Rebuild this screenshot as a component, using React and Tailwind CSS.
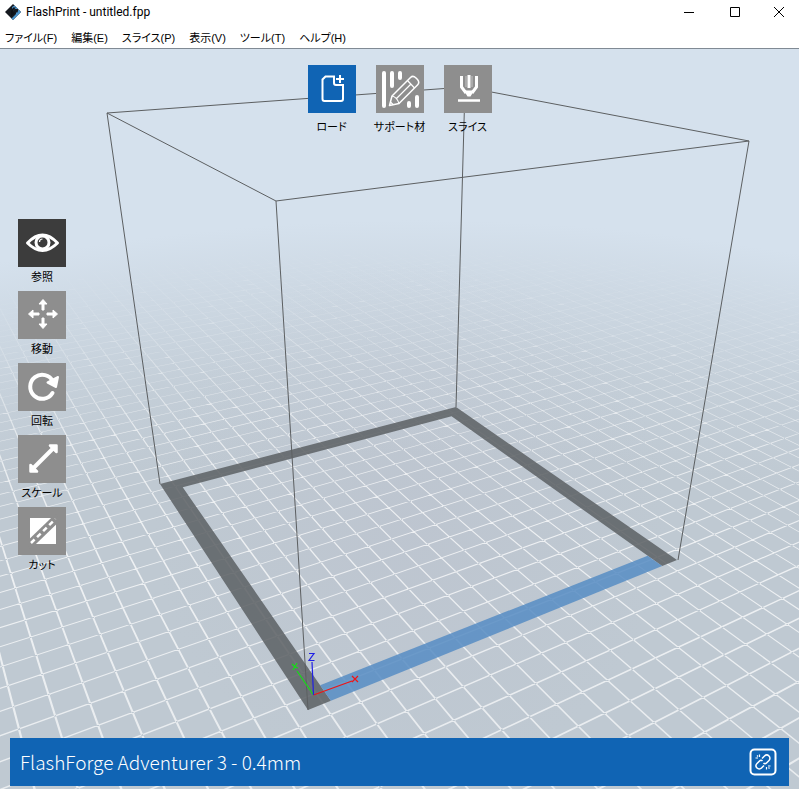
import { useState } from 'react';

const FRONT = [308, 710];
const RIGHT = [677, 560];
const BACK = [456, 407];
const LEFT = [160, 484];

const makeProjection = ([x0, y0], [x1, y1], [x2, y2], [x3, y3]) => {
  const dx1 = x1 - x2;
  const dx2 = x3 - x2;
  const dy1 = y1 - y2;
  const dy2 = y3 - y2;
  const sx = x0 - x1 + x2 - x3;
  const sy = y0 - y1 + y2 - y3;
  const den = dx1 * dy2 - dx2 * dy1;
  const g = (sx * dy2 - dx2 * sy) / den;
  const h = (dx1 * sy - sx * dy1) / den;
  const project = (u, v) => {
    const w = 1 + g * u + h * v;
    const x = ((x1 - x0 + g * x1) * u + (x3 - x0 + h * x3) * v + x0) / w;
    const y = ((y1 - y0 + g * y1) * u + (y3 - y0 + h * y3) * v + y0) / w;
    return `${x.toFixed(2)},${y.toFixed(2)}`;
  };
  return { g, h, project };
};

// Plate coordinates: 0..1 on each side is the 150 mm bed
const { g, h, project } = makeProjection(FRONT, RIGHT, BACK, LEFT);

const toPath = (points) => `M${points.map(([u, v]) => project(u, v)).join('L')}Z`;

const NEAR = 0.8;
const FAR = 4.2;
const HALF_LINE = 0.0019;

const gridPath = (() => {
  const parts = [];
  for (let k = -14; k < 84; k++) {
    const c = (k + 0.5) / 15;
    const a = c - HALF_LINE;
    const b = c + HALF_LINE;
    const v0 = (NEAR - 1 - g * c) / h;
    const v1 = (FAR - 1 - g * c) / h;
    parts.push(toPath([[a, v0], [a, v1], [b, v1], [b, v0]]));
    const u0 = (NEAR - 1 - h * c) / g;
    const u1 = (FAR - 1 - h * c) / g;
    parts.push(toPath([[u0, a], [u1, a], [u1, b], [u0, b]]));
  }
  return parts.join('');
})();

const E = 0.05;
const darkFrame = toPath([
  [0, 0], [0, 1], [1, 1], [1, 0], [1 - E, 0], [1 - E, 1 - E], [E, 1 - E], [E, 0],
]);
const blueFrame = toPath([[E, 0], [1 - E, 0], [1 - E, E], [E, E]]);

const BuildPlate = () => (
  <svg
    className="absolute inset-0 h-full w-full"
    viewBox="0 49 799 740"
    preserveAspectRatio="xMidYMid slice"
    aria-hidden="true"
  >
    <defs>
      {/* big circles centred far below, so the fog edge bends down at both sides */}
      <radialGradient id="ground" gradientUnits="userSpaceOnUse" cx="420" cy="2350" r="2130">
        <stop offset="0.7" stopColor="#bfc9d2" />
        <stop offset="0.89" stopColor="#bfc9d2" />
        <stop offset="0.93" stopColor="#bfc9d2" stopOpacity="0.78" />
        <stop offset="0.97" stopColor="#bfc9d2" stopOpacity="0.36" />
        <stop offset="1" stopColor="#bfc9d2" stopOpacity="0" />
      </radialGradient>
      <radialGradient id="fog" gradientUnits="userSpaceOnUse" cx="420" cy="2350" r="2130">
        <stop offset="0.72" stopColor="#fff" stopOpacity="0.62" />
        <stop offset="0.86" stopColor="#fff" stopOpacity="0.74" />
        <stop offset="0.91" stopColor="#fff" stopOpacity="0.62" />
        <stop offset="0.95" stopColor="#fff" stopOpacity="0.28" />
        <stop offset="0.99" stopColor="#fff" stopOpacity="0" />
      </radialGradient>
      <radialGradient id="plateTint" gradientUnits="userSpaceOnUse" cx="410" cy="520" r="260">
        <stop offset="0" stopColor="#b8b8c8" stopOpacity="0.22" />
        <stop offset="1" stopColor="#b8b8c8" stopOpacity="0" />
      </radialGradient>
    </defs>
    <rect y="49" width="799" height="740" fill="#d5e1ed" />
    <rect y="49" width="799" height="740" fill="url(#ground)" />
    <rect y="249" width="799" height="540" fill="url(#plateTint)" />
    <path d={gridPath} fill="url(#fog)" />
    <path d={darkFrame} fill="#5f6366" fillOpacity="0.88" />
    <path d={blueFrame} fill="#5a8ec4" fillOpacity="0.88" />
    <g fill="none" stroke="#5c5f61" strokeWidth="1">
      <path d="M107 113 465 87 749 141 276 201Z" />
      <path d="M107 113 160 484M465 87 456 407M749 141 678 560M276 201 308 710" />
    </g>
    <g fill="none" strokeWidth="1.2">
      <path d="M313.500 695 352 681M352 676l6 6M358 676l-6 6" stroke="#f01414" />
      <path d="M313.500 695 297 671M292 664l3 3M297 663l-4 7M295 667l3 1" stroke="#14e014" />
      <path d="M313.500 695 312 662M309 653.500h5l-5 7h5.500" stroke="#2020e6" />
    </g>
  </svg>
);

const AppLogo = () => (
  <svg className="h-4 w-4" viewBox="0 0 16 16" aria-hidden="true">
    <path d="M8 0 16 8 8 16 0 8Z" fill="#15191f" />
    <path d="M9.500 1.500 16 8 8 16 6.500 14.500 11 10V8.500H12.500L13.500 5H9.500L7 7.500V3Z" fill="#4a93cc" />
    <path d="M8 3.500H11L8 6.500V8.500H10L6 12.500V7Z" fill="#0d1117" />
  </svg>
);

const LoadIcon = () => (
  <svg className="h-12 w-12" viewBox="0 0 48 48" fill="none" stroke="#fff" aria-hidden="true">
    <path d="M26 11.500H17.500L14.500 14.500V34a2 2 0 0 0 2 2H33a2 2 0 0 0 2-2V20H28a2 2 0 0 1-2-2Z" strokeWidth="2" />
    <path d="M32 10v8M28 14h8" strokeWidth="2" />
  </svg>
);

const SupportIcon = () => (
  <svg className="h-12 w-12" viewBox="0 0 48 48" fill="none" stroke="#fff" aria-hidden="true">
    <path d="M8 8v33M16 8v13M24 8v5M33 38v3M41 32v9" strokeWidth="4" strokeLinecap="round" />
    <path
      d="M13.500 40.500 16 31 34.500 12.500Q37 10 40 13L41.500 14.500Q44 17.500 41.500 20L23 38.500Z"
      fill="#8e8e8e"
      strokeWidth="1.5"
      strokeLinejoin="round"
    />
    <path d="M16 31q5 1 7 7.500M31.500 15.500l7 7.500M20 34 35 19M14.500 37l2.500 2.500" strokeWidth="1.2" />
  </svg>
);

const SliceIcon = () => (
  <svg className="h-12 w-12" viewBox="0 0 48 48" fill="none" stroke="#fff" aria-hidden="true">
    <path d="M17.500 11v11L22 28M32.500 11v11L28 28" strokeWidth="3" />
    <path d="M22 11v11M28 11v11" strokeWidth="1" strokeOpacity="0.5" />
    <path d="M25 10v13" strokeWidth="3" />
    <path d="M19 24 22.500 25.500H27.500L31 24 26.500 31.500H23.500Z" fill="#fff" stroke="none" />
    <path d="M14 35.500h22" strokeWidth="2.500" />
  </svg>
);

const EyeIcon = () => (
  <svg className="h-12 w-12" viewBox="0 0 48 48" fill="none" stroke="#fff" aria-hidden="true">
    <path d="M9.500 24Q17 16 24.500 16T39.500 24Q32 31.500 24.500 31.500T9.500 24Z" strokeWidth="3" strokeLinejoin="round" />
    <circle cx="24.500" cy="23.500" r="6.500" strokeWidth="3" />
    <path d="M21.500 23a3 3 0 0 1 3-3" strokeWidth="1.200" />
  </svg>
);

const MoveIcon = () => (
  <svg className="h-12 w-12" viewBox="0 0 48 48" fill="#fff" stroke="#fff" strokeLinejoin="round" aria-hidden="true">
    <path d="M25 8.500 29 13H26V19H24V13H21ZM25 37.500 21 33H24V27H26V33H29ZM10.500 23 15 19V22H21V24H15V27ZM39.500 23 35 27V24H29V22H35V19Z" />
  </svg>
);

const RotateIcon = () => (
  <svg className="h-12 w-12" viewBox="0 0 48 48" aria-hidden="true">
    <path d="M34.500 30A12 12 0 1 1 35 18.500" fill="none" stroke="#fff" strokeWidth="4" strokeLinecap="round" />
    <path d="M40 14 38 24 29.500 19.500Z" fill="#fff" stroke="#fff" strokeWidth="2" strokeLinejoin="round" />
  </svg>
);

const ScaleIcon = () => (
  <svg className="h-12 w-12" viewBox="0 0 48 48" fill="#fff" aria-hidden="true">
    <path d="M15 33.500 36 12.500" stroke="#fff" strokeWidth="4" />
    <path d="M38.500 10.500V17L32 10.500ZM12.500 36.500V30L19 36.500Z" stroke="#fff" strokeWidth="2.500" strokeLinejoin="round" />
  </svg>
);

const CutIcon = () => (
  <svg className="h-12 w-12" viewBox="0 0 48 48" aria-hidden="true">
    <path d="M12 11H34L12 33ZM38 15V37H16Z" fill="#fff" />
    <path d="M10 39 40 10" stroke="#8e8e8e" strokeWidth="8" />
    <path d="M13 36 37.500 12" fill="none" stroke="#fff" strokeWidth="2.500" strokeDasharray="5 3.500" />
  </svg>
);

const UnlinkIcon = () => (
  <svg className="h-7 w-7" viewBox="0 0 28 28" fill="none" stroke="#fff" aria-hidden="true">
    <rect x="1.500" y="1.500" width="25" height="25" rx="4" strokeWidth="2" />
    <path
      d="M13 10.500 15.500 8a3 3 0 0 1 4.500 4.500L17.500 15q-1.500 1.500-3 0M15 17.500 12.500 20a3 3 0 0 1-4.500-4.500L10.500 13q1.500-1.500 3 0"
      strokeWidth="1.500"
    />
    <path d="M10.500 6.500v2.500M6.500 10H9M17.500 19v2.500M19 18h2.500M8 7.500l1 1M19.500 19.500l1 1" strokeWidth="1.200" />
  </svg>
);

const menus = ['ファイル(F)', '編集(E)', 'スライス(P)', '表示(V)', 'ツール(T)', 'ヘルプ(H)'];

const actions = [
  { label: 'ロード', icon: LoadIcon, primary: true },
  { label: 'サポート材', icon: SupportIcon },
  { label: 'スライス', icon: SliceIcon },
];

const tools = [
  { label: '参照', icon: EyeIcon },
  { label: '移動', icon: MoveIcon },
  { label: '回転', icon: RotateIcon },
  { label: 'スケール', icon: ScaleIcon },
  { label: 'カット', icon: CutIcon },
];

const ToolButton = ({ label, icon: Icon, color, gap, onClick }) => (
  <button onClick={onClick} className={`flex w-12 flex-col items-center ${gap}`}>
    <span className={`block h-12 w-12 ${color}`}>
      <Icon />
    </span>
    <span className="text-[11px] leading-4 whitespace-nowrap text-black [font-feature-settings:'palt']">
      {label}
    </span>
  </button>
);

const TitleBar = () => (
  <header className="flex h-6 items-center justify-between bg-white pl-[5px]">
    <div className="flex items-center gap-[5px]">
      <AppLogo />
      <h1 className="font-['Roboto','Noto_Sans',sans-serif] text-xs text-black">FlashPrint - untitled.fpp</h1>
    </div>
    <div className="flex">
      <button aria-label="最小化" className="flex w-11 justify-center">
        <svg className="h-3 w-3" viewBox="0 0 12 12" stroke="#000"><path d="M1 6.500h10" /></svg>
      </button>
      <button aria-label="最大化" className="flex w-12 justify-center">
        <svg className="h-3 w-3" viewBox="0 0 12 12" fill="none" stroke="#000"><path d="M1.500 1.500h9v9h-9z" /></svg>
      </button>
      <button aria-label="閉じる" className="flex w-10 justify-center">
        <svg className="h-3 w-3" viewBox="0 0 12 12" stroke="#000"><path d="M1 1 11 11M11 1 1 11" /></svg>
      </button>
    </div>
  </header>
);

const App = () => {
  const [activeTool, setActiveTool] = useState('参照');

  return (
    <div className="flex min-h-screen flex-col bg-white font-['Liberation_Sans','Noto_Sans_CJK_JP',sans-serif]">
      <TitleBar />
      <nav className="flex h-6 items-center gap-[14px] pt-1 pl-[5px] text-[11px] text-black [font-feature-settings:'palt']">
        {menus.map((menu) => (
          <button key={menu} className="whitespace-nowrap">{menu}</button>
        ))}
      </nav>

      <main className="relative flex flex-1 flex-col border-t border-[#808a94]">
        <BuildPlate />
        <div className="relative flex justify-center gap-5 pt-4">
          {actions.map(({ label, icon, primary }) => (
            <ToolButton
              key={label}
              label={label}
              icon={icon}
              gap="gap-1.5"
              color={primary ? 'bg-[#1064b4]' : 'bg-[#8e8e8e]'}
            />
          ))}
        </div>

        <div className="relative mt-21 flex flex-1 flex-col gap-1.5 pb-40 pl-[18px]">
          {tools.map(({ label, icon }) => (
            <ToolButton
              key={label}
              label={label}
              icon={icon}
              gap="gap-[2px]"
              color={activeTool === label ? 'bg-[#3c3c3c]' : 'bg-[#8e8e8e]'}
              onClick={() => setActiveTool(label)}
            />
          ))}
        </div>

        <footer className="relative mx-[10px] mb-[3px] flex h-12 items-center justify-between bg-[#1064b4] pr-3 pl-[10px]">
          <p className="font-['Noto_Sans_CJK_JP',sans-serif] text-[19px] font-light text-white">
            FlashForge Adventurer 3 - 0.4mm
          </p>
          <button aria-label="接続">
            <UnlinkIcon />
          </button>
        </footer>
      </main>
    </div>
  );
};

export default App;
